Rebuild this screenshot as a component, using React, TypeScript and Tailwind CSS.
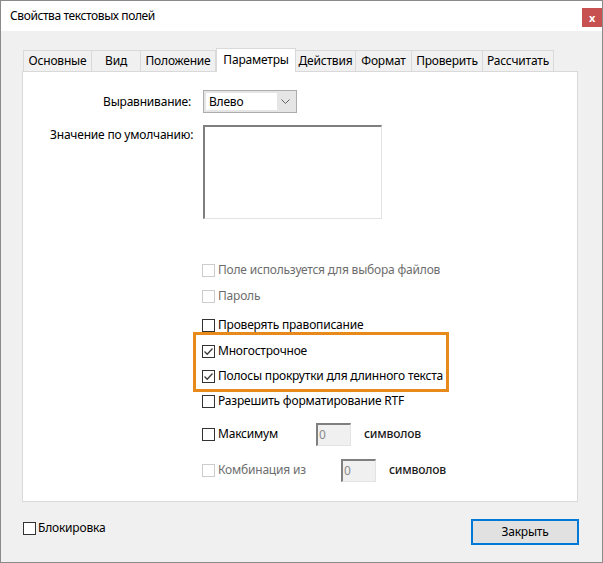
const font = { fontFamily: '"Noto Sans", "Liberation Sans", sans-serif' };

type Tab = { label: string; w: string; active?: boolean };

const tabs: Tab[] = [
  { label: "Основные", w: "w-[69px]" },
  { label: "Вид", w: "w-[49px]" },
  { label: "Положение", w: "w-[75px]" },
  { label: "Параметры", w: "w-[80px]", active: true },
  { label: "Действия", w: "w-[60px]" },
  { label: "Формат", w: "w-[56px]" },
  { label: "Проверить", w: "w-[71px]" },
  { label: "Рассчитать", w: "w-[71px]" },
];

function Box({ checked, disabled }: { checked?: boolean; disabled?: boolean }) {
  return (
    <span
      className={
        "flex h-[13px] w-[13px] shrink-0 items-center justify-center border bg-white " +
        (disabled ? "border-[#cccccc]" : "border-[#333333]")
      }
    >
      {checked && (
        <svg width="11" height="11" viewBox="0 0 11 11">
          <path d="M1.5 5.5 L4.2 8.2 L9.5 2.5" fill="none" stroke="#3c3c3c" strokeWidth="1.3" />
        </svg>
      )}
    </span>
  );
}

function CheckRow({
  label,
  checked,
  disabled,
  labelW = "",
  className = "",
  children,
}: {
  label: string;
  checked?: boolean;
  disabled?: boolean;
  labelW?: string;
  className?: string;
  children?: React.ReactNode;
}) {
  return (
    <div className={"flex h-[24px] items-center pl-[179px] " + className}>
      <Box checked={checked} disabled={disabled} />
      <span className={"ml-[3px] whitespace-nowrap " + labelW + (disabled ? " text-[#6d6d6d]" : " text-black")}>
        {label}
      </span>
      {children}
    </div>
  );
}

function NumInput() {
  return (
    <div className="flex h-[23px] w-[35px] items-center border-l-2 border-t-2 border-b border-r border-l-[#7f7f7f] border-t-[#7f7f7f] border-b-[#e3e3e3] border-r-[#e3e3e3] bg-[#f0f0f0] pl-[1px] text-[#8a8a8a]">
      0
    </div>
  );
}

export default function App() {
  return (
    <div
      style={font}
      className="flex h-[563px] w-[603px] flex-col border border-[#8a8a8a] bg-[#f0f0f0] text-[12px] tracking-[-0.2px] text-black"
    >
      {/* title bar */}
      <div className="flex h-[30px] shrink-0 items-start bg-white">
        <span className="ml-[9px] mt-[6px] text-[12px] tracking-[-0.4px]">Свойства текстовых полей</span>
        <button className="ml-auto mt-[7px] flex h-[19px] w-[20px] items-center justify-center bg-[#c75050] text-[11px] font-bold leading-none text-white">
          x
        </button>
      </div>

      <div className="flex flex-1 flex-col px-[22px] pt-[17px]">
        {/* tabs */}
        <div className="relative z-10 flex h-[23px] items-end">
          {tabs.map((t) =>
            t.active ? (
              <div
                key={t.label}
                className={
                  t.w +
                  " -mb-px flex h-[24px] items-center justify-center border border-b-0 border-[#d9d9d9] bg-white pb-[2px]"
                }
              >
                {t.label}
              </div>
            ) : (
              <div
                key={t.label}
                className={
                  t.w +
                  " flex h-[21px] items-center justify-center border border-b-0 border-l-0 border-[#d9d9d9] bg-[#f0f0f0] pb-[1px] first:border-l"
                }
              >
                {t.label}
              </div>
            )
          )}
        </div>

        {/* panel */}
        <div className="relative h-[431px] w-[556px] -ml-px border border-[#d9d9d9] bg-white">
          <div className="mt-[18px] flex items-center">
            <span className="w-[168px] text-right">Выравнивание:</span>
            <div className="ml-[12px] flex h-[23px] w-[94px] items-center border border-[#acacac] bg-[#e5e5e5] p-[2px]">
              <div className="flex h-full flex-1 items-center bg-white pl-[3px]">Влево</div>
              <div className="flex w-[17px] items-center justify-center">
                <svg width="9" height="6" viewBox="0 0 9 6">
                  <path d="M0.5 0.5 L4.5 4.5 L8.5 0.5" fill="none" stroke="#606060" strokeWidth="1" />
                </svg>
              </div>
            </div>
          </div>

          <div className="mt-[12px] flex items-start">
            <span className="ml-[27px] mt-[1px] w-[141px] whitespace-nowrap text-left">Значение по умолчанию:</span>
            <div className="ml-[12px] h-[94px] w-[179px] border-l-2 border-t-2 border-b border-r border-l-[#7f7f7f] border-t-[#7f7f7f] border-b-[#e3e3e3] border-r-[#e3e3e3] bg-white" />
          </div>

          <CheckRow label="Поле используется для выбора файлов" disabled className="mt-[39px]" />
          <CheckRow label="Пароль" disabled className="mt-[2px]" />
          <CheckRow label="Проверять правописание" className="mt-[5px]" />
          <CheckRow label="Многострочное" checked className="mt-[2px]" />
          <CheckRow label="Полосы прокрутки для длинного текста" checked className="mt-[1px]" />
          <CheckRow label="Разрешить форматирование RTF" className="mt-[1px]" />
          <CheckRow label="Максимум" labelW="w-[98px]" className="mt-[9px]">
            <NumInput />
            <span className="ml-[13px] font-medium text-[#1a1a1a]">символов</span>
          </CheckRow>
          <CheckRow label="Комбинация из" labelW="w-[123px]" disabled className="mt-[12px]">
            <NumInput />
            <span className="ml-[13px] font-medium text-[#1a1a1a]">символов</span>
          </CheckRow>

          {/* highlight frame */}
          <div className="pointer-events-none absolute left-[170px] top-[260px] h-[60px] w-[256px] border-[3px] border-[#e8891c]" />
        </div>

        {/* footer */}
        <div className="mt-[17px] flex items-start">
          <div className="flex items-center">
            <Box />
            <span className="ml-[2px]">Блокировка</span>
          </div>
          <button className="ml-auto mr-[1px] flex h-[26px] w-[108px] items-center justify-center border-2 border-[#0078d7] bg-[#e1e1e1]">
            Закрыть
          </button>
        </div>
      </div>
    </div>
  );
}
